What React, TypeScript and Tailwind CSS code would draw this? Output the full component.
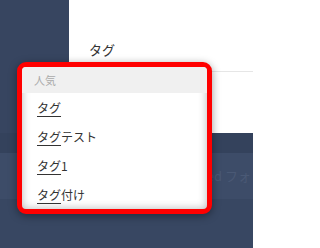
import React from "react";

export default function App() {
  const order = ["", "テスト", "1", "付け"];
  return (
    <div
      className="relative w-[253px] h-[248px] overflow-hidden bg-[#3a4964]"
      style={{ fontFamily: '"Noto Sans CJK JP", "Noto Sans", sans-serif' }}
    >
      <div className="flex h-[133px]">
        <div className="w-[69px] bg-[#374560]" />
        <div className="flex-1 bg-white flex flex-col">
          <div className="h-[72px] border-b border-[#e6e6e6] flex items-end pl-[20px] pb-[12px] text-[13px] text-[#333]">
            タグ
          </div>
        </div>
      </div>
      <div className="h-[20px] bg-[#34425c]" />
      <div className="h-[46px] bg-[#3d4c68] flex justify-end items-center pr-[2px] text-[13px] text-[#4a5975]">
        ed フォ
      </div>
      <div className="h-[49px] bg-[#384762]" />

      <div className="absolute left-[17px] top-[62px] w-[195px] h-[152px] rounded-[9px] border-[5px] border-[#ff0000] bg-white overflow-hidden shadow-[0_2px_8px_rgba(0,0,0,0.4)]">
        <div className="h-full w-full shadow-[inset_0_0_8px_rgba(0,0,0,0.3)] flex flex-col">
          <div className="h-[26px] bg-[#f0f0f0] flex items-center pl-[12px] text-[11px] text-[#aaaaaa]">
            人気
          </div>
          {order.map((s) => (
            <div key={s} className="h-[29px] flex items-center pl-[15px] text-[12px] text-[#333]">
              <span className="underline underline-offset-[3px]">タグ</span>
              <span>{s}</span>
            </div>
          ))}
        </div>
      </div>
    </div>
  );
}
